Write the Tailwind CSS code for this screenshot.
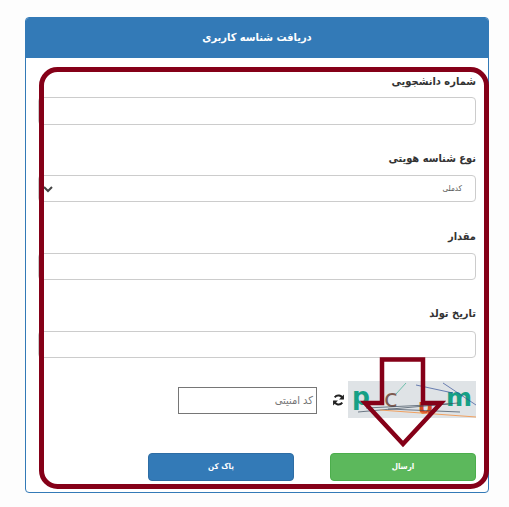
<!DOCTYPE html>
<html lang="fa" dir="rtl">
<head>
	<meta charset="UTF-8">
	<title>دریافت شناسه کاربری</title>
	<script src="https://cdn.jsdelivr.net/npm/@tailwindcss/browser@4"></script>
</head>
<body class="bg-[#fdfdfd] font-['DejaVu_Sans_Condensed','DejaVu_Sans',sans-serif]">
	<div class="relative w-[509px] h-[507px] overflow-hidden pt-[17px] pr-[20px] pl-[25px]">
		<div class="w-[464px] h-[476px] bg-white border border-[#337ab7] rounded-[4px] overflow-hidden">
			<div class="h-[40px] bg-[#337ab7] text-white text-[11px] font-bold flex items-center justify-center">دریافت شناسه کاربری</div>
			<form class="pr-[12px] pl-[12px] pt-[14px]">
				<div class="h-[20px] mb-[5px] text-[11px] leading-[20px] font-bold text-[#333]">شماره دانشجویی</div>
				<div class="h-[28px] bg-white border border-[#ccc] rounded-[4px] mb-[24px]"></div>

				<div class="h-[20px] mb-[6px] text-[11px] leading-[20px] font-bold text-[#333]">نوع شناسه هویتی</div>
				<div class="h-[27px] bg-white border border-[#ccc] rounded-[4px] mb-[25px] flex items-center justify-between pr-[13px] pl-[4px] text-[8px] text-[#555]">
					<span>کدملی</span>
					<svg width="10" height="8" viewBox="0 0 10 8" fill="none" stroke="#444" stroke-width="2"><path d="M1 2l4 4 4-4"/></svg>
				</div>

				<div class="h-[20px] mb-[6px] text-[11px] leading-[20px] font-bold text-[#333]">مقدار</div>
				<div class="h-[27px] bg-white border border-[#ccc] rounded-[4px] mb-[24px]"></div>

				<div class="h-[20px] mb-[7px] text-[11px] leading-[20px] font-bold text-[#333]">تاریخ تولد</div>
				<div class="h-[27px] bg-white border border-[#ccc] rounded-[4px] mb-[23px]"></div>

				<div class="h-[37px] flex items-center mb-[35px]">
					<svg class="shrink-0" width="128" height="37" viewBox="0 0 128 37">
						<rect width="128" height="37" fill="#dfe3e6"/>
						<text x="4" y="24" font-family="DejaVu Sans" font-weight="700" font-size="25" fill="#16a085" direction="ltr">p</text>
						<text x="36" y="26" font-family="DejaVu Sans" font-size="25" fill="#7d5a50" direction="ltr">c</text>
						<text x="70" y="33" font-family="DejaVu Sans" font-weight="700" font-size="22" fill="#d64a1f" direction="ltr">u</text>
						<text x="98" y="25" font-family="DejaVu Sans" font-weight="700" font-size="25" fill="#16a085" direction="ltr">m</text>
						<path d="M10 31L110 22M18 27L100 23M40 28L112 31" stroke="#3b4a5a" stroke-width="0.7" fill="none"/>
						<path d="M32 29L128 36" stroke="#f0a060" stroke-width="1" fill="none"/>
						<path d="M68 4L105 12M95 2L128 24" stroke="#34509a" stroke-width="0.7" fill="none"/>
						<path d="M48 13L58 2" stroke="#4fb59c" stroke-width="0.8" fill="none"/>
					</svg>
					<svg class="shrink-0 mr-[3px]" width="13" height="14" viewBox="0 0 24 24" fill="none" stroke="#222" stroke-width="3.6">
						<path d="M20 10a8.500 8.500 0 0 0-15-3"/><path d="M22 2v9h-9z" fill="#222" stroke="none"/>
						<path d="M4 14a8.500 8.500 0 0 0 15 3"/><path d="M2 22v-9h9z" fill="#222" stroke="none"/>
					</svg>
					<div class="shrink-0 w-[139px] h-[27px] mr-[15px] mt-[2px] border border-[#767676] bg-white text-[11px] leading-[25px] pr-[3px] text-[#757575]">کد امنیتی</div>
				</div>

				<div class="flex gap-[36px]">
					<button type="button" class="w-[146px] h-[28px] bg-[#5cb85c] border border-[#4cae4c] rounded-[4px] text-white text-[8px] font-bold">ارسال</button>
					<button type="button" class="w-[146px] h-[28px] bg-[#337ab7] border border-[#2e6da4] rounded-[4px] text-white text-[8px] font-bold">پاک کن</button>
				</div>
			</form>
		</div>

		<!-- red annotation drawn over the screenshot -->
		<svg class="absolute inset-0 pointer-events-none" width="509" height="507" viewBox="0 0 509 507" fill="none" stroke="#850018" stroke-width="5">
			<rect x="41.500" y="69.500" width="445" height="417" rx="16"/>
			<path d="M382 359.500H423V403H441L403 444L365 403H382Z" stroke-width="4.500"/>
		</svg>
	</div>
</body>
</html>
